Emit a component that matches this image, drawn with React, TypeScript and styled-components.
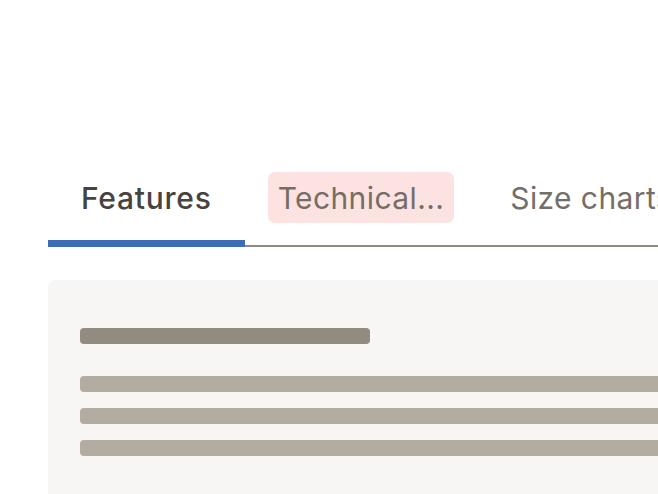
import React, { useState } from 'react';
import styled, { createGlobalStyle } from 'styled-components';

const GlobalStyle = createGlobalStyle`
  html, body {
    margin: 0;
    padding: 0;
    background: #ffffff;
    overflow: hidden;
  }
  body {
    font-family: Inter, "Noto Sans", sans-serif;
  }
`;

const Page = styled.div`
  width: 658px;
  height: 494px;
  overflow: hidden;
  padding: 172px 0 0 48px;
  box-sizing: border-box;
`;

const TabList = styled.div`
  display: flex;
  width: 700px;
  border-bottom: 2px solid #8f8a7d;
`;

const Tab = styled.button<{ $active?: boolean }>`
  position: relative;
  flex: none;
  display: flex;
  align-items: flex-start;
  height: 75px;
  padding: 0 33px;
  margin-bottom: -2px;
  border: none;
  background: none;
  cursor: pointer;
  font-family: Inter, "Noto Sans", sans-serif;
  font-size: 30px;
  letter-spacing: ${(p) => (p.$active ? '0.75px' : '0.4px')};
  font-weight: ${(p) => (p.$active ? 500 : 400)};
  color: ${(p) => (p.$active ? '#464441' : '#756e66')};
  white-space: nowrap;

  &::after {
    content: '';
    position: absolute;
    left: 0;
    right: 0;
    bottom: 0;
    height: 7px;
    background: ${(p) => (p.$active ? '#3e6db5' : 'transparent')};
  }
`;

const TabLabel = styled.span<{ $focused?: boolean }>`
  display: block;
  height: 51px;
  line-height: 53px;
  padding: 0 10px;
  margin: 0 -10px;
  border-radius: 7px;
  background: ${(p) => (p.$focused ? '#fde2e2' : 'transparent')};
`;

const Panel = styled.div`
  margin-top: 33px;
  width: 700px;
  height: 260px;
  background: #f7f6f4;
  border-radius: 7px;
  padding: 48px 32px;
  box-sizing: border-box;
  display: flex;
  flex-direction: column;
`;

const SkeletonBar = styled.div<{ $title?: boolean }>`
  height: 16px;
  border-radius: 4px;
  width: ${(p) => (p.$title ? '290px' : '100%')};
  background: ${(p) => (p.$title ? '#928b7f' : '#b3ada1')};
  margin-bottom: ${(p) => (p.$title ? '32px' : '16px')};
`;

const tabs = ['Features', 'Technical...', 'Size charts'];

const App: React.FC = () => {
  const [active, setActive] = useState(0);

  return (
    <>
      <GlobalStyle />
      <Page>
        <TabList>
          {tabs.map((t, i) => (
            <Tab key={t} $active={i === active} onClick={() => setActive(i)}>
              <TabLabel $focused={i === 1}>{t}</TabLabel>
            </Tab>
          ))}
        </TabList>
        <Panel>
          <SkeletonBar $title />
          <SkeletonBar />
          <SkeletonBar />
          <SkeletonBar />
        </Panel>
      </Page>
    </>
  );
};

export default App;
